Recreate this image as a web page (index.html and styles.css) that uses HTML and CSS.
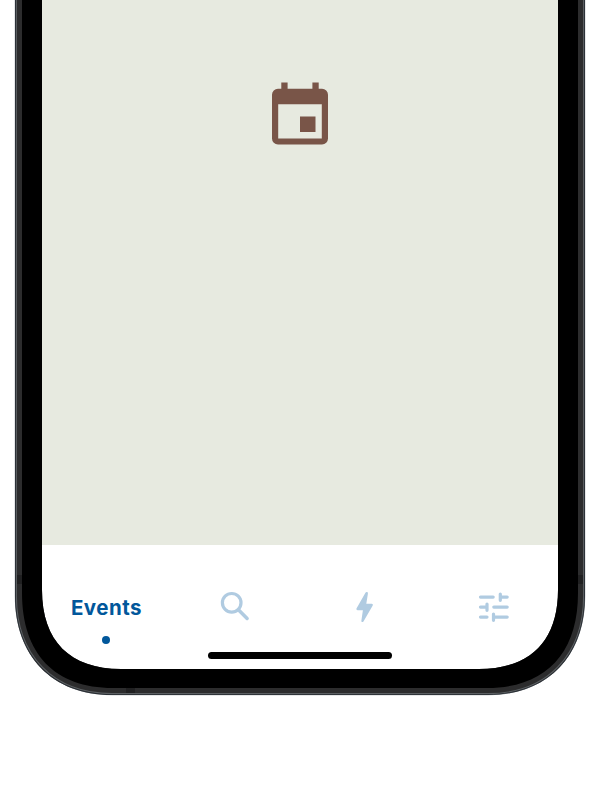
FILE: index.html
```
<!DOCTYPE html>
<html lang="en">
<head>
<meta charset="utf-8">
<title>Events</title>
<link rel="stylesheet" href="styles.css">
</head>
<body>
<div class="phone">
  <main class="screen">
    <svg class="event-icon" viewBox="0 -0.4 56 62" aria-hidden="true">
      <path fill-rule="evenodd" d="M9.3 0h6.3v6.3h24.8V0h6.3v6.3H50a6 6 0 0 1 6 6V56a6 6 0 0 1-6 6H6a6 6 0 0 1-6-6V12.3a6 6 0 0 1 6-6h3.3zM6.2 21.8V56h43.6V21.8zM28 34.2h15.5v15.5H28z"/>
    </svg>
  </main>
  <nav class="tabs">
    <a class="tab active"><span>Events</span></a>
    <a class="tab">
      <svg viewBox="0 0 36 36"><circle cx="13.7" cy="13.8" r="9.3" fill="none" stroke="currentColor" stroke-width="3.2"/><path d="M20.4 20.800 29.100 29.500" fill="none" stroke="currentColor" stroke-width="3.5" stroke-linecap="round"/></svg>
    </a>
    <a class="tab">
      <svg viewBox="0 0 36 36"><path fill="currentColor" d="M19.1 3.2c1.1-.6 2 .1 1.8 1.5l-1.6 10.1h5.3c1.2 0 1.6.9 1 1.9L16.6 32.2c-.9 1.5-2.5.9-2.2-.8l1.5-10.2h-5.2c-1.1 0-1.7-.9-1.1-1.9l8.7-15.4q.3-.5.8-.7z"/></svg>
    </a>
    <a class="tab">
      <svg viewBox="0 0 36 36"><path fill="none" stroke="currentColor" stroke-width="3.2" stroke-linecap="round" d="M4.500 8.100h12.700M24.500 8.100h6.700M24.300 5.100v6.200M4.500 18.100h6.500M11 15.100v6.200M17.800 18.100h13.400M4.500 28.100h6.500M17.500 25.100v6.200M17.800 28.100h13.400"/></svg>
    </a>
  </nav>
  <div class="home-indicator"></div>
  <svg class="frame" viewBox="0 0 600 810" aria-hidden="true">
    <path fill="#fff" fill-rule="evenodd" d="M0 0H600V810H0zM15 0V596C15 656 52 695 112 695H488C548 695 585 656 585 596V0z"/>
    <path fill="#2c2c2d" fill-rule="evenodd" d="M15 0V596C15 656 52 695 112 695H488C548 695 585 656 585 596V0zM42 0V590C42 641 70 669 121 669H479C530 669 558 641 558 590V0z"/>
    <path fill="none" stroke="#5b5f62" stroke-width="1.1" d="M16.4 0V596C16.4 655 53 693.6 112 693.6H488C547 693.6 583.6 655 583.6 596V0"/>
    <path fill="none" stroke="#26313a" stroke-width=".6" d="M15.3 0V596C15.3 655.7 52.3 694.7 112 694.7H488C547.7 694.7 584.7 655.7 584.7 596V0"/>
    <path fill="#202021" d="M17 575h5v9h-5zM578 575h5v9h-5zM126 688h9v5h-9z"/>
    <path fill="#000" fill-rule="evenodd" d="M22 0V593C22 654 55 688 113 688H487C545 688 578 654 578 593V0zM42 0V590C42 641 70 669 121 669H479C530 669 558 641 558 590V0z"/>
  </svg>
</div>
</body>
</html>
```
FILE: styles.css
```
* { box-sizing: border-box; }
body { margin: 0; background: #fff; font-family: Inter, "Liberation Sans", sans-serif; }
.phone {
  position: relative;
  width: 600px;
  height: 810px;
  padding: 0 42px;
  overflow: hidden;
}
.screen {
  height: 545px;
  padding-top: 82px;
  background: #e7eae0;
  text-align: center;
}
.event-icon { display: block; width: 56px; height: 62px; margin: 0 auto; overflow: visible; fill: #795548; }
.tabs {
  display: grid;
  grid-template-columns: repeat(4, 1fr);
  height: 124px;
  background: #fff;
}
.tab {
  position: relative;
  display: flex;
  align-items: center;
  justify-content: center;
  color: #b0cbe1;
}
.tab svg { width: 36px; height: 36px; }
.tab.active { color: #01579b; font-size: 20.5px; font-weight: 700; letter-spacing: .5px; }
.tab.active::after {
  content: "";
  position: absolute;
  left: 60px;
  top: 91px;
  width: 8px;
  height: 8px;
  border-radius: 50%;
  background: currentColor;
}
.home-indicator {
  position: absolute;
  left: 208px;
  top: 652px;
  width: 184px;
  height: 7px;
  border-radius: 4px;
  background: #000;
}
.frame { position: absolute; left: 0; top: 0; width: 600px; height: 810px; pointer-events: none; }
```
